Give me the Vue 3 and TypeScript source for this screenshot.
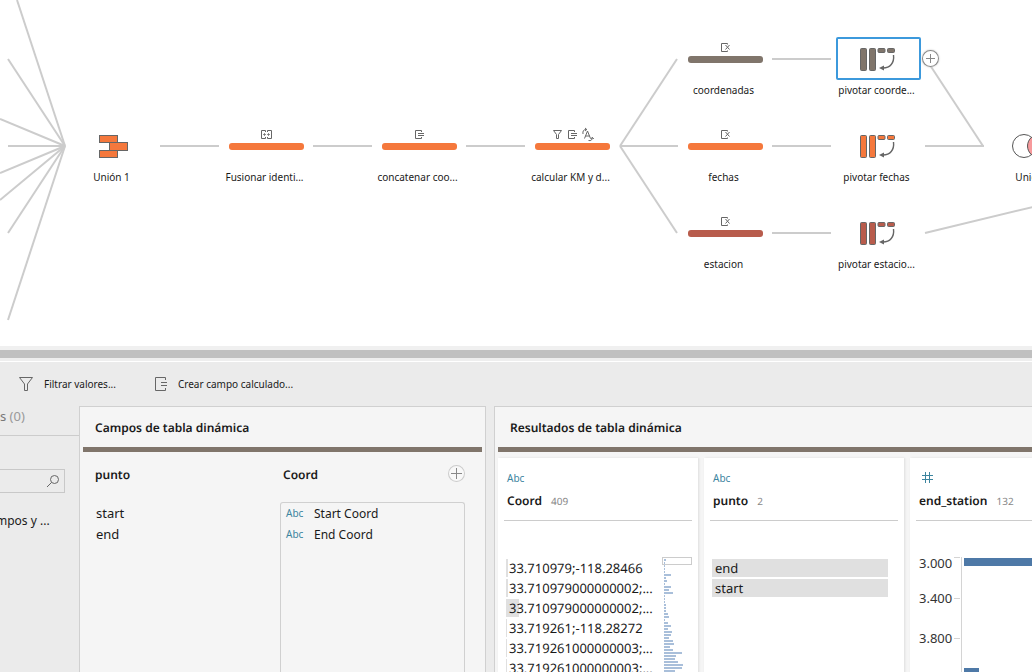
<script setup lang="ts">
type Badge = 'merge' | 'calc' | 'filter' | 'rename' | 'remove'
type Kind = 'union' | 'step' | 'pivot' | 'join'

interface FlowNode {
  kind: Kind
  label: string
  x: number
  y: number
  color: string
  badges?: Badge[]
  selected?: boolean
}

const orange = '#f5783c'
const taupe = '#80756b'
const brick = '#b85c4c'

const nodes: FlowNode[] = [
  { kind: 'union', label: 'Unión 1', x: 113, y: 146, color: orange },
  { kind: 'step', label: 'Fusionar identi...', x: 266, y: 146, color: orange, badges: ['merge'] },
  { kind: 'step', label: 'concatenar coo...', x: 419, y: 146, color: orange, badges: ['calc'] },
  { kind: 'step', label: 'calcular KM y d...', x: 572, y: 146, color: orange, badges: ['filter', 'calc', 'rename'] },
  { kind: 'step', label: 'coordenadas', x: 725, y: 59, color: taupe, badges: ['remove'] },
  { kind: 'step', label: 'fechas', x: 725, y: 146, color: orange, badges: ['remove'] },
  { kind: 'step', label: 'estacion', x: 725, y: 233, color: brick, badges: ['remove'] },
  { kind: 'pivot', label: 'pivotar coorde...', x: 878, y: 59, color: taupe, selected: true },
  { kind: 'pivot', label: 'pivotar fechas', x: 878, y: 146, color: orange },
  { kind: 'pivot', label: 'pivotar estacio...', x: 878, y: 233, color: brick },
  { kind: 'join', label: 'Unión', x: 1031, y: 146, color: '#f79a9c' },
]

const links: number[][] = [
  [17, 0, 65, 146], [8, 59, 65, 146], [0, 119, 65, 146], [8, 146, 65, 146],
  [0, 173, 65, 146], [0, 200, 65, 146], [8, 233, 65, 146], [8, 320, 65, 146],
  [160, 146, 219, 146], [313, 146, 372, 146], [466, 146, 525, 146],
  [620, 146, 677, 59], [620, 146, 678, 146], [620, 146, 677, 233],
  [772, 59, 831, 59], [772, 146, 831, 146], [772, 233, 831, 233],
  [926, 59, 983, 146], [925, 146, 984, 146], [925, 233, 1041, 205],
]

const badgeX = (count: number, i: number): number => 37 + i * 15 - ((count - 1) * 15) / 2

const pivotFields = ['Start Coord', 'End Coord']
const pivotNames = ['start', 'end']

const coordValues = [
  { text: '33.710979;-118.28466', bar: 2 },
  { text: '33.710979000000002;...', bar: 2 },
  { text: '33.710979000000002;...', bar: 13 },
  { text: '33.719261;-118.28272', bar: 1 },
  { text: '33.719261000000003;...', bar: 1 },
  { text: '33.719261000000003;...', bar: 1 },
]

const overview = [
  2, 1, 1, 1, 1, 7, 2, 3, 1, 7, 5, 9, 1, 1, 1, 2, 2, 2, 4, 5, 1, 4, 7, 4, 8, 7, 5, 9, 10, 6, 9,
  18, 12, 11, 14, 19, 18, 11,
]

const ticks = [
  { text: '3.000', line: 1, label: 11 },
  { text: '3.400', line: 42, label: 46 },
  { text: '3.800', line: 82, label: 86 },
]
</script>

<template>
  <div class="app">
    <section class="canvas" aria-label="Flujo">
      <svg class="links">
        <line v-for="(l, i) in links" :key="i" :x1="l[0]" :y1="l[1]" :x2="l[2]" :y2="l[3]" />
      </svg>
      <div
        v-for="n in nodes"
        :key="n.kind + n.label"
        class="node"
        :style="{ left: n.x - 60 + 'px', top: n.y - 22 + 'px' }"
      >
        <button type="button" class="shape" :class="{ selected: n.selected }" :aria-label="n.label">
          <svg width="85" height="43" viewBox="0 0 85 43">
            <g v-if="n.kind === 'union'" stroke="#666" :fill="n.color">
              <rect x="28.5" y="11.5" width="18" height="7" />
              <rect x="28.5" y="26.5" width="18" height="7" />
              <rect x="38.5" y="18.5" width="18" height="8" />
            </g>
            <g v-else-if="n.kind === 'pivot'" stroke="#666" fill="none">
              <g :fill="n.color">
                <rect x="24.5" y="11.5" width="6" height="22" rx="1" />
                <rect x="33.5" y="11.5" width="6" height="22" rx="1" />
                <rect x="42" y="11.5" width="7" height="4" rx="1" />
                <rect x="51.5" y="11.5" width="7" height="4" rx="1" />
              </g>
              <path d="M57.500 18C58.500 26 54 31 47 31" stroke-width="1.4" />
              <path d="M43 31L48 28.5V33.5Z" fill="#666" stroke="none" />
            </g>
            <g v-else-if="n.kind === 'join'" stroke="#555">
              <circle cx="50" cy="22" r="11.5" fill="#f79a9c" />
              <circle cx="35" cy="22" r="11.5" fill="#fff" />
              <path d="M42.500 13.3A11.5 11.5 0 0 0 42.500 30.7A11.5 11.5 0 0 0 42.500 13.3Z" :fill="n.color" />
            </g>
            <g v-else>
              <rect x="5" y="19" width="75" height="7" rx="3" :fill="n.color" />
              <g
                v-for="(b, i) in n.badges"
                :key="b"
                :transform="`translate(${badgeX(n.badges!.length, i)} 5)`"
                fill="none"
                stroke="#666"
              >
                <g v-if="b === 'merge'">
                  <path d="M4.500 3V1.500H.5V9.500H4.500V8M6.500 3V1.500H10.500V9.500H6.500V8" />
                  <path d="M2 5.500H5M3.500 4V7M6 5.500H9M7.500 4V7" stroke-width=".7" />
                </g>
                <path v-else-if="b === 'calc'" d="M7.500 3V1.500H1.500V9.500H7.500V8M4 4.500H10M4 6.500H10" />
                <path v-else-if="b === 'filter'" d="M1.500 1.500H9.500L6.500 5.500V9.500H4.500V5.500Z" />
                <g v-else-if="b === 'rename'">
                  <path d="M2.500 9.500L5.500 2L8.500 9.500M3.500 7H7.500" />
                  <path d="M1 5C.5 2 1.500 .5 4.500 .5M3 -1L4.800 .5L3 2M6.500 11.500C9 12 10.300 11 10.300 8.500M8.800 10L10.300 8.300L11.800 10" />
                </g>
                <path v-else d="M7.500 2.500V1.500H1.500V9.500H7.500V8.500M5.500 3L9.500 7.500M9.500 3L5.500 7.500" />
              </g>
            </g>
          </svg>
        </button>
        <span class="node-label">{{ n.label }}</span>
        <button v-if="n.selected" type="button" class="plus node-plus" aria-label="Agregar paso">
          <svg width="17" height="17" viewBox="0 0 17 17"><path d="M8.500 4V13M4 8.500H13" /></svg>
        </button>
      </div>
    </section>

    <div class="splitter" role="separator"></div>

    <section class="details">
      <div class="toolbar">
        <button type="button" class="tool">
          <svg width="16" height="16" viewBox="0 0 16 16">
            <path d="M1.500 1.500H14.500L9.500 8V14.500H6.500V8Z" />
          </svg>
          Filtrar valores...
        </button>
        <button type="button" class="tool">
          <svg width="14" height="16" viewBox="0 0 14 16">
            <path d="M11.500 4V1.500H1.500V14.500H11.500V12M7 6.500H13M7 9.500H13" />
          </svg>
          Crear campo calculado...
        </button>
      </div>

      <div class="columns">
        <aside class="sidebar">
          <p class="changes">s <span>(0)</span></p>
          <div class="search">
            <input type="search" aria-label="Buscar" />
            <svg width="14" height="14" viewBox="0 0 14 14">
              <circle cx="8.500" cy="5.500" r="4" />
              <path d="M5.500 8.500L1 13" />
            </svg>
          </div>
          <p class="fields-count">mpos y ...</p>
        </aside>

        <section class="panel pivot-panel">
          <h2>Campos de tabla dinámica</h2>
          <div class="pivot-grid">
            <div>
              <h3>punto</h3>
              <ul class="names">
                <li v-for="p in pivotNames" :key="p">{{ p }}</li>
              </ul>
            </div>
            <div class="coord">
              <div class="coord-head">
                <h3>Coord</h3>
                <button type="button" class="plus" aria-label="Agregar valores">
                  <svg width="17" height="17" viewBox="0 0 17 17"><path d="M8.500 3V14M3 8.500H14" /></svg>
                </button>
              </div>
              <ul class="drop">
                <li v-for="f in pivotFields" :key="f"><span class="abc">Abc</span>{{ f }}</li>
              </ul>
            </div>
          </div>
        </section>

        <section class="panel results-panel">
          <h2>Resultados de tabla dinámica</h2>
          <div class="cards">
            <article class="card">
              <header>
                <span class="abc">Abc</span>
                <h3>Coord <small>409</small></h3>
              </header>
              <div class="profile">
                <ul class="values">
                  <li v-for="(v, i) in coordValues" :key="i">
                    <i :style="{ width: v.bar + 'px' }"></i><span>{{ v.text }}</span>
                  </li>
                </ul>
                <svg class="overview" width="30" height="116">
                  <rect class="frame" x=".5" y=".5" width="29" height="7" />
                  <rect v-for="(w, i) in overview" :key="i" x="2" :y="2 + i * 3" :width="w" height="2" />
                </svg>
              </div>
            </article>

            <article class="card">
              <header>
                <span class="abc">Abc</span>
                <h3>punto <small>2</small></h3>
              </header>
              <ul class="values words">
                <li>end</li>
                <li>start</li>
              </ul>
            </article>

            <article class="card">
              <header>
                <span class="abc">
                  <svg class="hash" width="11" height="11" viewBox="0 0 11 11">
                    <path d="M3.500 0V11M7.500 0V11M0 3.500H11M0 7.500H11" />
                  </svg>
                </span>
                <h3>end_station <small>132</small></h3>
              </header>
              <svg class="histogram">
                <template v-for="t in ticks" :key="t.text">
                  <text x="9" :y="t.label">{{ t.text }}</text>
                  <path :d="`M44 ${t.line - 0.5}H50`" />
                </template>
                <path d="M51.500 0V130" />
                <rect x="54" y="1" width="200" height="8" />
                <rect x="54" y="111" width="15" height="8" />
              </svg>
            </article>
          </div>
        </section>
      </div>
    </section>
  </div>
</template>

<style>
body {
  margin: 0;
  overflow: hidden;
}
</style>

<style scoped>
.app {
  display: flex;
  flex-direction: column;
  height: 100vh;
  overflow: hidden;
  background: #fff;
  color: #1a1a1a;
  font: 12px/20px 'Noto Sans', 'Open Sans', sans-serif;
}
h2,
h3,
p,
ul {
  margin: 0;
  padding: 0;
  list-style: none;
}
h2,
h3 {
  font-size: 12px;
  font-weight: 600;
  text-rendering: geometricPrecision;
}
button {
  padding: 0;
  border: 0;
  background: none;
  font: inherit;
  color: inherit;
}
svg {
  display: block;
}
.canvas {
  position: relative;
  flex: 0 0 346px;
  overflow: hidden;
}
.links {
  width: 100%;
  height: 100%;
  overflow: visible;
}
.links line {
  stroke: #ccc;
  stroke-width: 2;
}
.node {
  position: absolute;
  display: flex;
  flex-direction: column;
  align-items: center;
  width: 121px;
}
.shape {
  border-radius: 2px;
}
.shape.selected {
  background: #fff;
  box-shadow: inset 0 0 0 2px #3c99dc;
}
.node-label {
  padding-right: 4px;
  font-size: 10px;
  white-space: nowrap;
}
.plus {
  width: 17px;
  height: 17px;
  border-radius: 50%;
  background: #f8f8f8;
  box-shadow: inset 0 0 0 1px #ccc;
}
.plus path {
  fill: none;
  stroke: #888;
}
.node-plus {
  position: absolute;
  top: 13px;
  left: 104px;
  background: #fff;
  box-shadow: inset 0 0 0 1px #888, 0 0 2px #bbb;
}
.splitter {
  flex: none;
  height: 8px;
  border-top: 4px solid #f0f0f0;
  border-bottom: 3px solid #eee;
  background: #c0c0c0;
}
.details {
  flex: 1;
  display: flex;
  flex-direction: column;
  min-height: 0;
  border-top: 1px solid #fff;
  background: #ebebeb;
}
.toolbar {
  display: flex;
  flex: none;
  gap: 38px;
  height: 44px;
  padding-left: 18px;
}
.tool {
  display: flex;
  align-items: center;
  gap: 10px;
  font-size: 10px;
}
.tool svg {
  fill: none;
  stroke: #666;
}
.columns {
  flex: 1;
  display: flex;
  min-height: 0;
}
.sidebar {
  flex: 0 0 79px;
  overflow: hidden;
}
.changes {
  height: 29px;
  border-bottom: 1px solid #ccc;
  color: #777;
  font-size: 13px;
}
.changes span {
  color: #999;
}
.search {
  display: flex;
  align-items: center;
  width: 65px;
  height: 24px;
  box-sizing: border-box;
  margin: 33px 0 18px;
  padding-right: 4px;
  border: 1px solid #c8c8c8;
  border-left: 0;
}
.search input {
  flex: 1;
  min-width: 0;
  height: 100%;
  padding: 0;
  border: 0;
  outline: 0;
  background: none;
}
.search svg {
  fill: none;
  stroke: #666;
}
.fields-count {
  margin-left: -4px;
}
.panel {
  box-sizing: border-box;
  padding: 0 3px;
  border: 1px solid #d0d0d0;
  border-bottom: 0;
  background: #f5f5f5;
  overflow: hidden;
}
.pivot-panel {
  flex: 0 0 407px;
  display: flex;
  flex-direction: column;
}
.results-panel {
  flex: 1;
  min-width: 0;
  margin-left: 8px;
  padding-right: 0;
  border-right: 0;
}
.panel h2 {
  flex: none;
  padding: 11px 12px 9px;
  border-bottom: 5px solid #80756b;
}
.pivot-grid {
  flex: 1;
  display: grid;
  grid-template-columns: 185px 185px;
  padding: 13px 12px 0;
}
.names {
  margin-top: 18px;
  padding-left: 1px;
  font-size: 13px;
  line-height: 21px;
}
.coord {
  display: flex;
  flex-direction: column;
}
.coord-head {
  display: flex;
  align-items: flex-start;
  justify-content: space-between;
  height: 20px;
  padding-left: 3px;
}
.drop {
  flex: 1;
  margin-top: 17px;
  border: 1px solid #d0d0d0;
  border-bottom: 0;
  border-radius: 3px 3px 0 0;
  line-height: 21px;
}
.drop li {
  display: flex;
  padding-left: 5px;
}
.drop .abc {
  width: 28px;
}
.abc {
  color: #3d859f;
  font-size: 10px;
}
.cards {
  display: flex;
  gap: 6px;
  height: 100%;
  padding-top: 6px;
}
.card {
  flex: 0 0 200px;
  background: #fff;
  box-shadow: 1px 0 2px #ddd;
}
.card header {
  margin: 0 6px;
  padding: 10px 3px 9px;
  border-bottom: 1px solid #ccc;
}
.card header .abc {
  display: block;
  height: 20px;
}
.card header h3 {
  padding-top: 3px;
}
.card header small {
  margin-left: 6px;
  color: #888;
  font-size: 10px;
  font-weight: 400;
}
.hash {
  padding: 4px 3px;
  fill: none;
  stroke: #3d859f;
}
.profile {
  display: flex;
  justify-content: space-between;
  padding-right: 6px;
}
.values {
  display: flex;
  flex-direction: column;
  gap: 2px;
  margin: 38px 0 0 8px;
  font-size: 13px;
  line-height: 18px;
  text-rendering: geometricPrecision;
}
.values li {
  display: grid;
  white-space: nowrap;
}
.values i,
.values span {
  grid-area: 1 / 1;
}
.values i {
  background: #e0e0e0;
}
.values span {
  padding-left: 3px;
}
.words {
  margin-right: 16px;
}
.words li {
  padding-left: 3px;
  background: #e0e0e0;
}
.overview {
  margin-top: 36px;
  fill: #a9bfda;
}
.overview .frame {
  fill: none;
  stroke: #ccc;
}
.histogram {
  width: 100%;
  height: 130px;
  margin-top: 36px;
  fill: #4e79a7;
}
.histogram path {
  stroke: #d4d4d4;
}
.histogram text {
  fill: #333;
  font-size: 13px;
}
</style>
